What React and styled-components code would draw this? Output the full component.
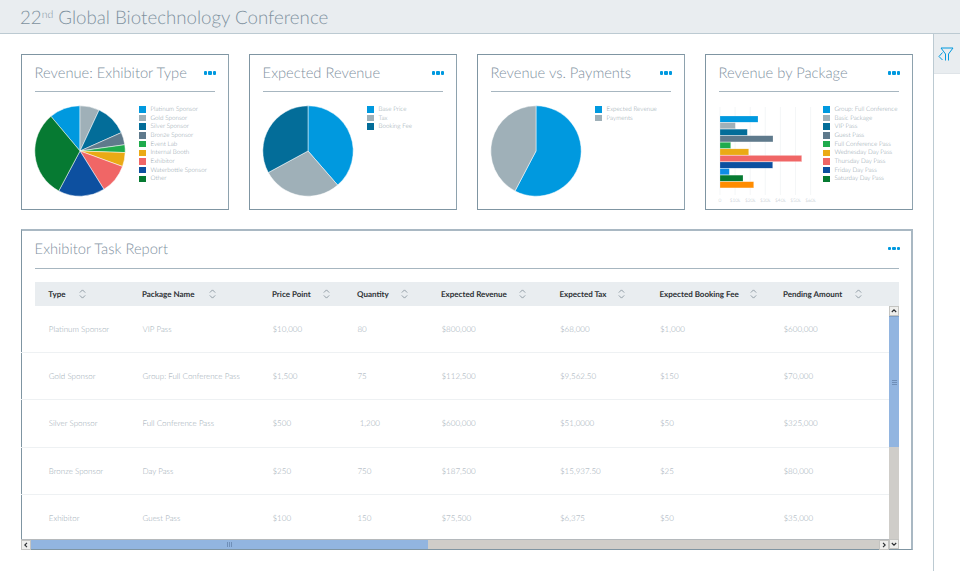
import React from 'react';
import styled, { createGlobalStyle } from 'styled-components';

const Global = createGlobalStyle`
  html, body { margin: 0; padding: 0; background: #fff; }
  body { font-family: Lato, "Open Sans", sans-serif; text-rendering: geometricPrecision; }
`;
const Page = styled.div`
  width: 960px; height: 571px; display: flex; flex-direction: column; overflow: hidden; opacity: 0.999;
`;
const TopBar = styled.header`
  height: 33px; box-sizing: content-box; background: #e9edf0; border-bottom: 1.5px solid #bccad2;
  display: flex; align-items: center; padding-left: 20px;
`;
const PageTitle = styled.h1`
  margin: 0; font-size: 18.7px; font-weight: 300; color: #7f929f;
  sup { font-size: 10.5px; line-height: 0; vertical-align: 6px; }
`;
const Body = styled.div`flex: 1; display: flex; min-height: 0;`;
const Main = styled.main`
  width: 933px; box-sizing: border-box; padding: 20px 20px 0 21px;
  display: flex; flex-direction: column; gap: 19px;
`;
const Rail = styled.aside`flex: 1; border-left: 1px solid #bccad2;`;
const FilterButton = styled.div`
  height: 39px; background: #e9edf0; border-bottom: 1px solid #dfe4e8;
  display: flex; align-items: center; justify-content: center; padding-right: 3px;
`;
const CardGrid = styled.div`display: grid; grid-template-columns: repeat(4, 208px); gap: 20px;`;
const Card = styled.section`
  box-sizing: border-box; height: ${p => p.$h}px; background: #fff;
  border: 1px solid #7f95a2;
  border-top: ${p => p.$wide ? '2px solid #a9b8c3' : '1px solid #7f95a2'};
  border-right: ${p => p.$wide ? '2px solid #a9b8c3' : '1px solid #8ea2ae'};
  display: flex; flex-direction: column;
`;
const CardHead = styled.div`
  margin: 0 ${p => p.$wide ? 12 : 13}px 0 13px; height: ${p => p.$h}px; box-sizing: border-box;
  padding-bottom: ${p => p.$wide ? 2 : 0}px;
  border-bottom: 1px solid #a7b6c0;
  display: flex; align-items: center; justify-content: space-between;
`;
const CardTitle = styled.h2`
  margin: 0 0 0 -0.4px; font-size: 14.7px; font-weight: 300; color: #7f929f;
`;
const Dots = styled.div`
  display: flex; gap: 1px; margin-right: -1px;
  i { width: 3.3px; height: 3.3px; border-radius: 1px; background: #0099df; display: block; }
`;
const ChartRow = styled.div`
  display: flex; gap: 13px; padding: 13px 0 0 12px;
`;
const ChartSvg = styled.svg`width: 92px; height: 92px; flex: none; overflow: visible;`;
const Legend = styled.ul`
  list-style: none; margin: 0; padding: 0; display: flex; flex-direction: column;
`;
const LegendItem = styled.li`
  height: 8.7px; display: flex; align-items: center; gap: 5px;
  font-size: 6.3px; font-weight: 300; color: #8c9ca7; white-space: nowrap;
`;
const Swatch = styled.span`
  width: 6.5px; height: 6.5px; background: ${p => p.$c}; flex: none;
`;
const COLS = '93.7px 130px 85px 84px 118.5px 100px 123.5px 1fr';
const TableHead = styled.div`
  margin: 13px 12px 0 13px; height: 24px; background: #e9edf0; padding-left: 13.3px;
  display: grid; grid-template-columns: ${COLS}; align-items: center;
`;
const HeadCell = styled.div`
  font-size: 8px; font-weight: 700; color: #2e3236; display: flex; align-items: center; white-space: nowrap;
  svg { margin-left: ${p => p.$gap}px; flex: none; }
`;
const ScrollArea = styled.div`
  flex: 1; min-height: 0; display: grid; grid-template-columns: 1fr 10px 12px; grid-template-rows: 1fr 10px;
`;
const Rows = styled.div`overflow: hidden; margin-left: -1px;`;
const Row = styled.div`
  height: 47.2px; box-sizing: border-box; border-bottom: 1px solid #eef1f3; padding-left: 27.8px;
  display: grid; grid-template-columns: ${COLS}; align-items: center;
  &:last-child { border-bottom: 0; }
`;
const Cell = styled.div`font-size: 8px; font-weight: 300; color: #9aa9b3; white-space: pre;`;
const VTrack = styled.div`
  background: #cfcdc9; display: flex; flex-direction: column; grid-row: 1; grid-column: 2;
`;
const HTrack = styled.div`
  background: #cfcdc9; display: flex; grid-row: 2; grid-column: 1; margin-left: -1px;
  border-top: 1px solid #b5b9bc; box-sizing: border-box;
`;
const Corner = styled.div`grid-row: 2; grid-column: 2; background: #cfcdc9; display: flex;`;
const SBtn = styled.div`
  width: 10px; height: 10px; flex: none; box-sizing: border-box; background: #eeeeec;
  border: 1px solid #c4c4c1; display: flex; align-items: center; justify-content: center;
`;
const VThumb = styled.div`
  height: 130px; background: #92b5e0; border-top: 1px solid #7f9fc6; display: flex; align-items: center; justify-content: center;
`;
const HThumb = styled.div`
  width: 397px; background: #92b5e0; display: flex; align-items: center; justify-content: center;
`;
const Spacer = styled.div`flex: 1;`;
const Grip = styled.div`
  display: flex; flex-direction: ${p => p.$v ? 'column' : 'row'}; gap: 1px;
  i { display: block; background: #6f8fb8; ${p => p.$v ? 'width:5px;height:1px;' : 'width:1px;height:5px;'} }
`;

const polar = (cx, cy, r, a) => {
  const t = (a - 90) * Math.PI / 180;
  return [cx + r * Math.cos(t), cy + r * Math.sin(t)];
};
const Pie = ({ stops, colors }) => (
  <ChartSvg viewBox="0 0 92 92">
    {colors.map((c, i) => {
      const [a, b] = [stops[i], stops[i + 1]];
      const [x1, y1] = polar(46, 46, 45.2, a);
      const [x2, y2] = polar(46, 46, 45.2, b);
      return (
        <path key={c + i} d={`M46 46L${x1} ${y1}A45.2 45.2 0 ${b - a > 180 ? 1 : 0} 1 ${x2} ${y2}Z`}
          fill={c} stroke="#fff" strokeWidth="0.5" strokeLinejoin="round" />
      );
    })}
  </ChartSvg>
);
const bars = [
  [38, '#0099df'], [15.3, '#9fb0b8'], [27.3, '#036d99'], [53, '#5f7a8c'], [10.7, '#1fab4d'], [28.7, '#eaaa15'],
  [81.7, '#f06666'], [52.7, '#0d50a0'], [9.3, '#0f8ce6'], [23, '#067a32'], [33.7, '#ff8c00'],
];
const BarChart = () => (
  <ChartSvg viewBox="0 0 92 92">
    {[0, 1, 2, 3, 4, 5, 6].map(i => (
      <g key={i}>
        <line x1={2 + i * 15.1} x2={2 + i * 15.1} y1="2" y2="90" stroke="#eff2f4" strokeWidth="0.7" />
        <text x={2 + i * 15.1} y="96.5" textAnchor="middle" fontSize="4.8" fontWeight="300" fill="#b6c2ca" fontFamily="Lato">
          {i === 0 ? '0' : `$${i}0k`}
        </text>
      </g>
    ))}
    {bars.map(([w, c], i) => <rect key={i} x="2" y={11 + i * 6.57} width={w} height="6.2" fill={c} stroke="#fff" strokeOpacity="0.5" strokeWidth="0.4" />)}
  </ChartSvg>
);
const Chevron = ({ d }) => (
  <svg width="6" height="6" viewBox="0 0 6 6"><path d={d} fill="none" stroke="#2a2d30" strokeWidth="1.1" /></svg>
);
const Sort = () => (
  <svg width="7" height="10" viewBox="0 0 7 10"><path d="M.8 3.6 3.5.9l2.7 2.7M.8 6.4l2.7 2.7 2.7-2.7" fill="none" stroke="#7d8c96" strokeWidth="0.8" /></svg>
);
const MoreDots = () => <Dots><i /><i /><i /></Dots>;

const C = { blue: '#0099df', grey: '#9fb0b8', teal: '#036d99', slate: '#5f7a8c', green: '#1fab4d', amber: '#eaaa15', red: '#f06666', navy: '#0d50a0', forest: '#067a32' };
const cards = [
  { title: 'Revenue: Exhibitor Type',
    legend: [['Platinum Sponsor', C.blue], ['Gold Sponsor', C.grey], ['Silver Sponsor', C.teal], ['Bronze Sponsor', C.slate], ['Event Lab', C.green], ['Internal Booth', C.amber], ['Exhibitor', C.red], ['Waterbottle Sponsor', C.navy], ['Other', C.forest]],
    chart: <Pie stops={[-40, 0, 25, 66, 82, 92, 110, 148, 208, 320]} colors={[C.blue, C.grey, C.teal, C.slate, C.green, C.amber, C.red, C.navy, C.forest]} /> },
  { title: 'Expected Revenue',
    legend: [['Base Price', C.blue], ['Tax', C.grey], ['Booking Fee', C.teal]],
    chart: <Pie stops={[0, 139, 241.5, 360]} colors={[C.blue, C.grey, C.teal]} /> },
  { title: 'Revenue vs. Payments',
    legend: [['Expected Revenue', C.blue], ['Payments', C.grey]],
    chart: <Pie stops={[0, 207.7, 360]} colors={[C.blue, C.grey]} /> },
  { title: 'Revenue by Package',
    legend: [['Group: Full Conference', C.blue], ['Basic Package', C.grey], ['VIP Pass', C.teal], ['Guest Pass', C.slate], ['Full Conference Pass', C.green], ['Wednesday Day Pass', C.amber], ['Thursday Day Pass', C.red], ['Friday Day Pass', C.navy], ['Saturday Day Pass', C.forest]],
    chart: <BarChart /> },
];
const heads = [['Type', 13.5], ['Package Name', 14], ['Price Point', 12], ['Quantity', 12.5], ['Expected Revenue', 12], ['Expected Tax', 11.5], ['Expected Booking Fee', 11.5], ['Pending Amount', 13]];
const rows = [
  ['Platinum Sponsor', 'VIP Pass', '$10,000', '80', '$800,000', '$68,000', '$1,000', '$600,000'],
  ['Gold Sponsor', 'Group: Full Conference Pass', '$1,500', '75', '$112,500', '$9,562.50', '$150', '$70,000'],
  ['Silver Sponsor', 'Full Conference Pass', '$500', ' 1,200', '$600,000', '$51,0000', '$50', '$325,000'],
  ['Bronze Sponsor', 'Day Pass', '$250', '750', '$187,500', '$15,937.50', '$25', '$80,000'],
  ['Exhibitor', 'Guest Pass', '$100', '150', '$75,500', '$6,375', '$50', '$35,000'],
];

export default function App() {
  return (
    <Page>
      <Global />
      <TopBar>
        <PageTitle>22<sup>nd</sup> Global Biotechnology Conference</PageTitle>
      </TopBar>
      <Body>
        <Main>
          <CardGrid>
            {cards.map(card => (
              <Card key={card.title} $h={156}>
                <CardHead $h={37}>
                  <CardTitle>{card.title}</CardTitle>
                  <MoreDots />
                </CardHead>
                <ChartRow>
                  {card.chart}
                  <Legend>
                    {card.legend.map(([label, c]) => (
                      <LegendItem key={label}><Swatch $c={c} />{label}</LegendItem>
                    ))}
                  </Legend>
                </ChartRow>
              </Card>
            ))}
          </CardGrid>
          <Card $h={321} $wide>
            <CardHead $h={38} $wide>
              <CardTitle>Exhibitor Task Report</CardTitle>
              <MoreDots />
            </CardHead>
            <TableHead>
              {heads.map(([h, gap]) => <HeadCell key={h} $gap={gap}>{h}<Sort /></HeadCell>)}
            </TableHead>
            <ScrollArea>
              <Rows>
                {rows.map(r => (
                  <Row key={r[0]}>{r.map((v, i) => <Cell key={i}>{v}</Cell>)}</Row>
                ))}
              </Rows>
              <VTrack>
                <SBtn><Chevron d="M.8 4 3 1.8 5.2 4" /></SBtn>
                <VThumb><Grip $v><i /><i /><i /></Grip></VThumb>
                <Spacer />
              </VTrack>
              <HTrack>
                <SBtn><Chevron d="M4 .8 1.8 3 4 5.2" /></SBtn>
                <HThumb><Grip><i /><i /><i /></Grip></HThumb>
                <Spacer />
                <SBtn><Chevron d="M2 .8 4.2 3 2 5.2" /></SBtn>
              </HTrack>
              <Corner><SBtn><Chevron d="M.8 2 3 4.2 5.2 2" /></SBtn></Corner>
            </ScrollArea>
          </Card>
        </Main>
        <Rail>
          <FilterButton>
            <svg width="16" height="16" viewBox="0 0 16 16" fill="none" stroke="#0099df" strokeWidth="1">
              <path d="M3 2h12l-4.5 6v6.5" />
              <path d="M3 2l4.5 6v6.5" />
              <path d="M4.5 6.5 1 10.5 4.5 14" />
            </svg>
          </FilterButton>
        </Rail>
      </Body>
    </Page>
  );
}
